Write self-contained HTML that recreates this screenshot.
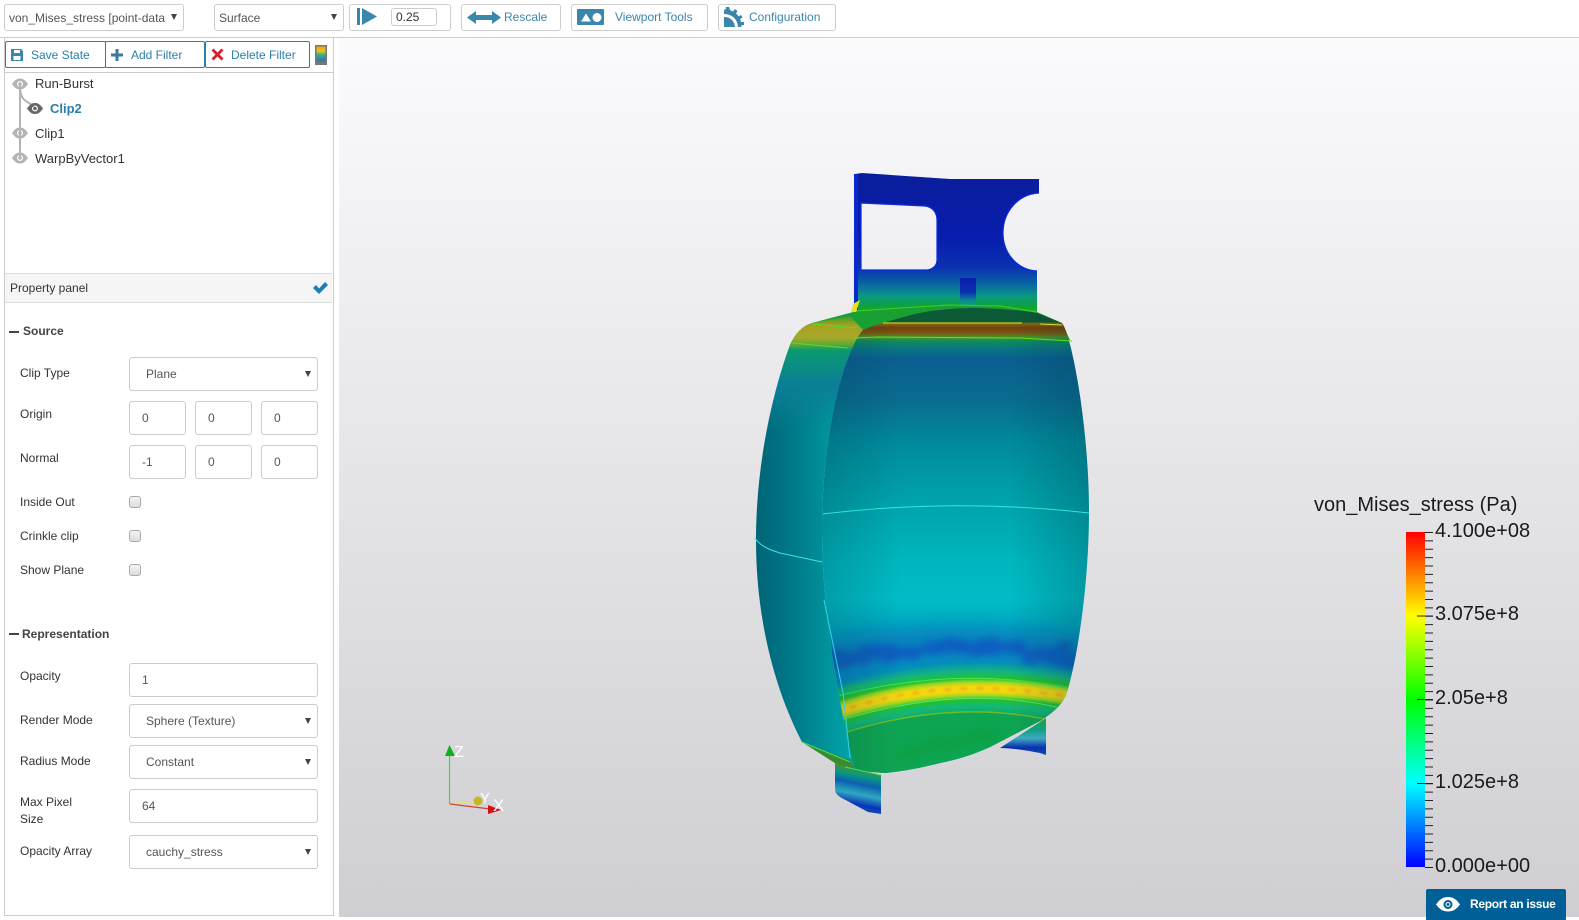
<!DOCTYPE html>
<html><head><meta charset="utf-8"><title>ParaView Glance</title>
<style>
html,body{margin:0;padding:0;background:#fff;width:1579px;height:920px;overflow:hidden;font-family:"Liberation Sans",sans-serif;font-size:12px;color:#333}
.a{position:absolute;box-sizing:border-box}
.t{position:absolute;white-space:nowrap;line-height:16px}
.b{position:absolute;box-sizing:border-box;border:1px solid #ccc;border-radius:3px;background:#fff}
.f{position:absolute;box-sizing:border-box;border:1px solid #ccc;border-radius:3px;background:#fff;color:#555;line-height:33px;white-space:nowrap;padding-left:16px}
.n{padding-left:12px}
.f.s:after,.b.s:after{content:"";position:absolute;right:6px;top:13px;border-left:3.5px solid transparent;border-right:3.5px solid transparent;border-top:6px solid #444}
.b.s:after{top:9px}
.btn{position:absolute;box-sizing:border-box;top:41px;height:27px;border:1px solid #2a7ea8;border-radius:2px;color:#2b7fa8;line-height:27px;background:#fff;white-space:nowrap}
.l{color:#3a86ad}
.c{position:absolute;left:129px;width:12px;height:12px;box-sizing:border-box;border:1px solid #aaa;border-radius:3px;background:linear-gradient(#f3f3f3,#dcdcdc)}
.bold{font-weight:bold;color:#444}
</style></head><body>

<!-- viewport -->
<div class="a" style="left:339px;top:38px;width:1240px;height:879px;background:linear-gradient(#fbfafc,#cfced2)"></div>
<div class="a" style="left:0;top:37px;width:1579px;height:1px;background:#ccc"></div>

<svg class="a" style="left:0;top:0" width="1579" height="920" viewBox="0 0 1579 920">
<defs>
<linearGradient id="plate" gradientUnits="userSpaceOnUse" x1="0" y1="173" x2="0" y2="312">
<stop offset="0" stop-color="#0a1e9c"/><stop offset=".45" stop-color="#081cae"/><stop offset=".68" stop-color="#0a30b0"/><stop offset=".8" stop-color="#0a66a4"/><stop offset=".89" stop-color="#0a9a80"/><stop offset=".96" stop-color="#0ea13a"/><stop offset="1" stop-color="#20b020"/>
</linearGradient>
<linearGradient id="slot" gradientUnits="userSpaceOnUse" x1="0" y1="278" x2="0" y2="306">
<stop offset="0" stop-color="#0a1eb0"/><stop offset=".5" stop-color="#0a30b0"/><stop offset=".8" stop-color="#0a8a98"/><stop offset="1" stop-color="#10a070"/>
</linearGradient>
<linearGradient id="front" gradientUnits="userSpaceOnUse" x1="0" y1="308" x2="0" y2="700">
<stop offset="0" stop-color="#0d5a36"/><stop offset=".035" stop-color="#0d5a36"/><stop offset=".04" stop-color="#8a6a10"/><stop offset=".05" stop-color="#74400f"/><stop offset=".065" stop-color="#7a5a10"/><stop offset=".075" stop-color="#4a9428"/><stop offset=".085" stop-color="#0e8a5c"/><stop offset=".105" stop-color="#0a7484"/><stop offset=".13" stop-color="#0a5f90"/><stop offset=".235" stop-color="#0a6c90"/><stop offset=".34" stop-color="#008a9c"/><stop offset=".49" stop-color="#00a2aa"/><stop offset=".645" stop-color="#00b6be"/><stop offset=".74" stop-color="#00bcc6"/><stop offset=".82" stop-color="#00a8c0"/><stop offset="1" stop-color="#0a80c0"/>
</linearGradient>
<linearGradient id="shell" gradientUnits="userSpaceOnUse" x1="756" y1="0" x2="845" y2="0">
<stop offset="0" stop-color="#006476"/><stop offset=".5" stop-color="#007e8c"/><stop offset="1" stop-color="#00a0a6"/>
</linearGradient>
<linearGradient id="shelltop" gradientUnits="userSpaceOnUse" x1="0" y1="316" x2="0" y2="430">
<stop offset="0" stop-color="#30a030"/><stop offset=".08" stop-color="#a8a020"/><stop offset=".19" stop-color="#a8a828"/><stop offset=".26" stop-color="#50a838"/><stop offset=".3" stop-color="#0a9a70"/><stop offset=".6" stop-color="#0a7f96"/><stop offset="1" stop-color="#0a7f96" stop-opacity="0"/>
</linearGradient>
<linearGradient id="edge" gradientUnits="userSpaceOnUse" x1="820" y1="0" x2="1090" y2="0">
<stop offset="0" stop-color="#003040" stop-opacity=".22"/><stop offset=".3" stop-color="#003040" stop-opacity="0"/><stop offset=".7" stop-color="#003040" stop-opacity="0"/><stop offset="1" stop-color="#003040" stop-opacity=".25"/>
</linearGradient>
<linearGradient id="legL" gradientUnits="userSpaceOnUse" x1="852" y1="766" x2="842" y2="816">
<stop offset="0" stop-color="#608a20"/><stop offset=".15" stop-color="#0a9a80"/><stop offset=".32" stop-color="#0a60b0"/><stop offset=".52" stop-color="#30a8c0"/><stop offset=".72" stop-color="#0a34b8"/><stop offset="1" stop-color="#0a7a9a"/>
</linearGradient>
<linearGradient id="legR" gradientUnits="userSpaceOnUse" x1="0" y1="718" x2="0" y2="755">
<stop offset="0" stop-color="#30a030"/><stop offset=".3" stop-color="#0aa080"/><stop offset=".55" stop-color="#40a8c0"/><stop offset=".8" stop-color="#0a30b0"/><stop offset="1" stop-color="#0a50b0"/>
</linearGradient>
<linearGradient id="cbar" gradientUnits="userSpaceOnUse" x1="0" y1="532" x2="0" y2="867">
<stop offset="0" stop-color="#ff0000"/><stop offset=".25" stop-color="#ffff00"/><stop offset=".5" stop-color="#00ff00"/><stop offset=".75" stop-color="#00ffff"/><stop offset="1" stop-color="#0000ff"/>
</linearGradient>
<linearGradient id="cicon" x1="0" y1="0" x2="0" y2="1">
<stop offset="0" stop-color="#f39a10"/><stop offset=".3" stop-color="#e8c820"/><stop offset=".55" stop-color="#40b080"/><stop offset="1" stop-color="#2a70c0"/>
</linearGradient>
<filter id="b1" filterUnits="userSpaceOnUse" x="800" y="570" width="320" height="240"><feGaussianBlur stdDeviation="1.2"/></filter>
<filter id="b4" filterUnits="userSpaceOnUse" x="800" y="570" width="320" height="240"><feGaussianBlur stdDeviation="4"/></filter>
<filter id="b8" filterUnits="userSpaceOnUse" x="800" y="570" width="320" height="240"><feGaussianBlur stdDeviation="9"/></filter>
<filter id="noisy" filterUnits="userSpaceOnUse" x="800" y="570" width="320" height="240">
<feTurbulence type="fractalNoise" baseFrequency=".05 .1" numOctaves="2" seed="4" result="n"/>
<feDisplacementMap in="SourceGraphic" in2="n" scale="22" xChannelSelector="R" yChannelSelector="G"/>
<feGaussianBlur stdDeviation="3"/>
</filter>
<clipPath id="frontclip"><path d="M863 330C870 327 876 325 883 323C905 316 925 311 940 310C955 308 968 308 980 308C1000 309 1020 310 1037 313L1062 323C1072 335 1089 430 1089 510C1089 590 1076 665 1066 695C1060 708 1050 714 1042 720L990 747C970 756 955 760 940 763C920 768 900 772 883 773L855 770C838 700 822 610 822 530C822 430 845 350 863 330Z"/></clipPath>
<path id="eye" d="M-8 0C-5-4.500-2.500-5.500 0-5.500C2.500-5.500 5-4.500 8 0C5 4.500 2.500 5.500 0 5.500C-2.500 5.500-5 4.500-8 0ZM0-3A3 3 0 1 0 0 3A3 3 0 1 0 0-3ZM0-1.800A1.800 1.800 0 1 1 0 1.800A1.800 1.800 0 1 1 0-1.800Z" fill-rule="evenodd"/>
</defs>

<!-- legs (behind) -->
<path d="M1000 748L1046 718V755L1040 753C1025 750 1010 748 1000 748Z" fill="url(#legR)"/>
<path d="M835 762L881 775V814L868 812L840 797C836 794 835 792 835 788Z" fill="url(#legL)"/>

<!-- top plate -->
<path fill-rule="evenodd" fill="url(#plate)" d="M855 174L862 173L950 179L1039 179V193C1018 194 1003 212 1003 233C1003 254 1018 270 1037 271V312L857 312ZM861 203L925 206C933 207 937 213 937 220V260C937 266 932 270 926 270H861Z"/>
<path d="M856 174V310" stroke="#0a28d0" stroke-width="4" fill="none"/>
<path d="M861 203L925 206C933 207 937 213 937 220V260C937 266 932 270 926 270H861ZM1039 193C1018 194 1003 212 1003 233C1003 254 1018 270 1037 271" stroke="#0a2ce0" stroke-width="1.200" fill="none"/>
<rect x="960" y="278" width="16" height="28" fill="url(#slot)"/>

<!-- green collar between plate and front -->
<path d="M812 323L857 311L900 308L950 305L1000 306L1037 312L1062 323L1070 340H853Z" fill="#18a032"/>
<path d="M857 311L900 308L950 305L1000 306L1037 312" stroke="#40d020" stroke-width="1" fill="none"/>
<path d="M856 312L860 300L853 304L851 312Z" fill="#e8e020"/>

<!-- left shell -->
<path d="M790 345C796 332 803 326 812 323L850 316L863 330C845 350 822 430 822 530C822 610 838 700 855 770L835 763L802 742C775 690 756 620 756 540C756 470 770 400 790 345Z" fill="url(#shell)"/>
<path d="M790 345C796 332 803 326 812 323L850 316L863 330C845 350 822 430 822 530C822 610 838 700 855 770L835 763L802 742C775 690 756 620 756 540C756 470 770 400 790 345Z" fill="url(#shelltop)"/>
<path d="M802 742L850 760L855 770L835 763Z" fill="#3a8a30"/>

<!-- front panel -->
<g clip-path="url(#frontclip)">
<rect x="815" y="300" width="285" height="480" fill="url(#front)"/>
<path d="M815 662Q950 628 1095 658" stroke="#0a78c0" stroke-width="34" fill="none" filter="url(#b8)" opacity=".8"/>
<path d="M815 666Q950 632 1095 662" stroke="#0a5cc0" stroke-width="16" fill="none" filter="url(#noisy)" opacity=".85"/>
<path d="M815 694Q945 658 1095 688V790H815Z" fill="#0aa860"/>
<path d="M825 716Q945 672 1085 699" stroke="#12b878" stroke-width="44" fill="none" filter="url(#b4)"/>
<path d="M825 716Q945 672 1085 699" stroke="#20c030" stroke-width="28" fill="none" filter="url(#b1)"/>
<path d="M825 716Q945 672 1085 699" stroke="#a8d820" stroke-width="17" fill="none" filter="url(#b1)"/>
<path d="M825 716Q945 672 1085 699" stroke="#f4d808" stroke-width="9" fill="none" filter="url(#b1)"/>
<path d="M835 713Q945 673 1075 698" stroke="#f0a020" stroke-width="3" stroke-dasharray="7 9" fill="none" filter="url(#b1)" opacity=".7"/>
<path d="M847 732Q950 700 1045 719L1000 760L880 785L850 770Z" fill="#0ea552"/>
<path d="M847 732Q950 700 1045 719" stroke="#6cbc28" stroke-width="1.500" fill="none"/>
<path d="M900 755Q950 740 1000 735" stroke="#0a9a30" stroke-width="14" fill="none" filter="url(#b4)" opacity=".3"/>
<path d="M830 698Q960 663 1075 690" stroke="#3ae860" stroke-width="1" fill="none"/>
<path d="M835 722Q960 683 1060 708" stroke="#50e870" stroke-width="1" fill="none"/>
<rect x="815" y="300" width="285" height="480" fill="url(#edge)"/>
</g>

<!-- feature edges -->
<path d="M853 338L878 337L1020 338L1072 341" stroke="#50e820" stroke-width="1" fill="none"/>
<path d="M883 323H1022M1040 324L1062 325" stroke="#d8e020" stroke-width="1" fill="none"/>
<path d="M792 343L848 348M812 324L857 328" stroke="#50e030" stroke-width="1" fill="none"/>
<path d="M823 514Q957 498 1089 513" stroke="#30e8e8" stroke-width="1" fill="none"/>
<path d="M755 538C760 546 770 550 780 553L822 562" stroke="#30e8e8" stroke-width="1" fill="none"/>
<path d="M824 600L843 693L850 758" stroke="#30d4ea" stroke-width="1" fill="none"/>
<path d="M802 742L850 762M845 767L880 775" stroke="#40e060" stroke-width="1" fill="none"/>

<!-- axes -->
<path d="M449.500 804V755" stroke="#50d050" stroke-width="1.200"/>
<path d="M449.500 745L455 756H445Z" fill="#10b020"/>
<path d="M450 804L478 801" stroke="#e8e070" stroke-width="1.500"/>
<circle cx="478" cy="801" r="4.500" fill="#c8b820"/>
<path d="M450 804L490 809" stroke="#d04040" stroke-width="1.200"/>
<path d="M488 805L501 810L488 814Z" fill="#d81010"/>
<text x="454" y="757" font-size="16" fill="#fff" font-family="Liberation Sans">Z</text>
<text x="480" y="803" font-size="15" fill="#fff" font-family="Liberation Sans">Y</text>
<text x="493" y="811" font-size="17" fill="#fff" font-family="Liberation Sans">X</text>

<!-- colour bar -->
<rect x="1406" y="532" width="19" height="335" fill="url(#cbar)"/>
<line x1="1429" y1="532" x2="1429" y2="868" stroke="#222" stroke-width="8" stroke-dasharray="1 7.375"/>
<path d="M1417 616H1433M1417 699.500H1433M1417 783.500H1433" stroke="#222" stroke-width="1"/>
<path d="M1425 867.500H1433" stroke="#222" stroke-width="1"/>
<g font-family="Liberation Sans" font-size="20" fill="#1a1a1a">
<text x="1314" y="511">von_Mises_stress (Pa)</text>
<text x="1435" y="537">4.100e+08</text>
<text x="1435" y="620">3.075e+8</text>
<text x="1435" y="704">2.05e+8</text>
<text x="1435" y="788">1.025e+8</text>
<text x="1435" y="872">0.000e+00</text>
</g>
</svg>

<!-- toolbar -->
<div class="b s" style="left:4px;top:4px;width:180px;height:27px;color:#555;line-height:26px;padding-left:4px;overflow:hidden"><span style="display:block;width:156px;overflow:hidden;white-space:nowrap">von_Mises_stress [point-data]</span></div>
<div class="b s" style="left:214px;top:4px;width:130px;height:27px;color:#555;line-height:26px;padding-left:4px">Surface</div>
<div class="b" style="left:349px;top:4px;width:102px;height:27px"></div>
<svg class="a" style="left:356px;top:8px" width="22" height="18"><rect x="1" y="0" width="3" height="17" fill="#3a86ad"/><path d="M6 0L21 8.500L6 17Z" fill="#3a86ad"/></svg>
<div class="b" style="left:391px;top:8px;width:46px;height:18px;color:#333;line-height:16px;padding-left:4px">0.25</div>
<div class="b" style="left:461px;top:4px;width:100px;height:27px"></div>
<svg class="a" style="left:467px;top:9px" width="35" height="17"><path d="M0 8.500L9 2V6H25V2L34 8.500L25 15V11H9V15Z" fill="#3a86ad"/></svg>
<div class="t l" style="left:504px;top:9px">Rescale</div>
<div class="b" style="left:571px;top:4px;width:137px;height:27px"></div>
<svg class="a" style="left:577px;top:9px" width="27" height="16"><rect width="27" height="16" rx="1" fill="#3a86ad"/><path d="M4 12.500L9 4.500L14 12.500Z" fill="#fff"/><circle cx="20" cy="8.500" r="4.500" fill="#fff"/></svg>
<div class="t l" style="left:615px;top:9px">Viewport Tools</div>
<div class="b" style="left:718px;top:4px;width:118px;height:27px"></div>
<svg class="a" style="left:724px;top:7px" width="21" height="20" viewBox="0 0 21 20">
<path d="M0 3L2 2L2 0L5 0L6 3C7 3.500 8 4 9 4.500L11 2L13.500 4L12 6.500C13 7.300 13.800 8.200 14.500 9.200L17 8L18.500 10.500L16 12C16.500 13 16.800 14 17 15L20 15V18L17.300 18.300L17.300 20H0Z" fill="#3a86ad"/>
<path d="M0 8.500C7 8.500 12 13 12.500 20" stroke="#fff" stroke-width="3" fill="none"/>
</svg>
<div class="t l" style="left:749px;top:9px">Configuration</div>

<!-- left panel -->
<div class="a" style="left:4px;top:37px;width:330px;height:879px;border:1px solid #ccc;border-top:1px solid #ccc;background:#fff"></div>
<div class="btn" style="left:5px;width:101px;padding-left:25px">Save State</div>
<div class="btn" style="left:105px;width:100px;padding-left:25px">Add Filter</div>
<div class="btn" style="left:205px;width:105px;padding-left:25px">Delete Filter</div>
<svg class="a" style="left:11px;top:49px" width="12" height="12"><path d="M0 0H10L12 2V12H0ZM3 1V4H9V1ZM2.500 7V11H9.500V7Z" fill="#3a86ad" fill-rule="evenodd"/></svg>
<svg class="a" style="left:111px;top:49px" width="12" height="12"><path d="M4.500 0H7.500V4.500H12V7.500H7.500V12H4.500V7.500H0V4.500H4.500Z" fill="#3a7a9c"/></svg>
<svg class="a" style="left:211px;top:48px" width="13" height="13"><path d="M2.500 0.500L6.500 4.500L10.500 0.500L12.500 2.500L8.500 6.500L12.500 10.500L10.500 12.500L6.500 8.500L2.500 12.500L0.500 10.500L4.500 6.500L0.500 2.500Z" fill="#d8202a"/></svg>
<svg class="a" style="left:315px;top:45px" width="12" height="20"><rect width="12" height="20" fill="#777"/><rect x="1.500" y="1.500" width="9" height="15" fill="url(#cicon)"/></svg>
<div class="a" style="left:5px;top:72px;width:328px;height:1px;background:#ccc"></div>

<svg class="a" style="left:0;top:70px" width="60" height="100">
<path d="M20 14V88" stroke="#b4b4b4" stroke-width="2" fill="none"/>
<path d="M20 18C21 33 28 30 34 37" stroke="#b4b4b4" stroke-width="2" fill="none"/>
<g fill="#b4b4b4"><use href="#eye" x="20" y="14"/><use href="#eye" x="20" y="63"/><use href="#eye" x="20" y="88"/></g>
<use href="#eye" x="35" y="38.500" fill="#666"/>
</svg>
<div class="t" style="left:35px;top:76px;font-size:13px">Run-Burst</div>
<div class="t" style="left:50px;top:101px;font-size:13px;font-weight:bold;color:#2b7fa8">Clip2</div>
<div class="t" style="left:35px;top:126px;font-size:13px">Clip1</div>
<div class="t" style="left:35px;top:151px;font-size:13px">WarpByVector1</div>

<!-- property panel -->
<div class="a" style="left:5px;top:273px;width:327px;height:30px;background:#f5f5f5;border-top:1px solid #ddd;border-bottom:1px solid #ddd"></div>
<div class="t" style="left:10px;top:280px">Property panel</div>
<svg class="a" style="left:313px;top:282px" width="15" height="12"><path d="M0 6L3 3L6 6.500L12 0L15 3L6 12Z" fill="#1c7fb4"/></svg>

<div class="a" style="left:9px;top:331px;width:10px;height:2px;background:#444"></div>
<div class="t bold" style="left:23px;top:323px">Source</div>
<div class="t" style="left:20px;top:365px">Clip Type</div>
<div class="f s" style="left:129px;top:357px;width:189px;height:34px">Plane</div>
<div class="t" style="left:20px;top:406px">Origin</div>
<div class="f n" style="left:129px;top:401px;width:57px;height:34px">0</div>
<div class="f n" style="left:195px;top:401px;width:57px;height:34px">0</div>
<div class="f n" style="left:261px;top:401px;width:57px;height:34px">0</div>
<div class="t" style="left:20px;top:450px">Normal</div>
<div class="f n" style="left:129px;top:445px;width:57px;height:34px">-1</div>
<div class="f n" style="left:195px;top:445px;width:57px;height:34px">0</div>
<div class="f n" style="left:261px;top:445px;width:57px;height:34px">0</div>

<div class="t" style="left:20px;top:494px">Inside Out</div><div class="c" style="top:496px"></div>
<div class="t" style="left:20px;top:528px">Crinkle clip</div><div class="c" style="top:530px"></div>
<div class="t" style="left:20px;top:562px">Show Plane</div><div class="c" style="top:564px"></div>

<div class="a" style="left:9px;top:633px;width:10px;height:2px;background:#444"></div>
<div class="t bold" style="left:22px;top:626px">Representation</div>
<div class="t" style="left:20px;top:668px">Opacity</div>
<div class="f n" style="left:129px;top:663px;width:189px;height:34px">1</div>
<div class="t" style="left:20px;top:712px">Render Mode</div>
<div class="f s" style="left:129px;top:704px;width:189px;height:34px">Sphere (Texture)</div>
<div class="t" style="left:20px;top:753px">Radius Mode</div>
<div class="f s" style="left:129px;top:745px;width:189px;height:34px">Constant</div>
<div class="t" style="left:20px;top:794px">Max Pixel</div>
<div class="t" style="left:20px;top:811px">Size</div>
<div class="f n" style="left:129px;top:789px;width:189px;height:34px">64</div>
<div class="t" style="left:20px;top:843px">Opacity Array</div>
<div class="f s" style="left:129px;top:835px;width:189px;height:34px">cauchy_stress</div>

<!-- report button -->
<div class="a" style="left:1426px;top:889px;width:140px;height:31px;background:#005f96;border-radius:2px 2px 0 0;color:#fff;font-weight:bold;line-height:30px;padding-left:44px;letter-spacing:-.3px">Report an issue</div>
<svg class="a" style="left:1436px;top:897px" width="25" height="16"><path d="M0 7.500C4 1.500 8 0 12 0C16 0 20 1.500 24 7.500C20 13 16 14.500 12 14.500C8 14.500 4 13 0 7.500ZM12 3A4.500 4.500 0 1 0 12 12A4.500 4.500 0 1 0 12 3Z" fill="#fff" fill-rule="evenodd"/><circle cx="12" cy="7.500" r="2" fill="none" stroke="#fff"/></svg>
</body></html>
